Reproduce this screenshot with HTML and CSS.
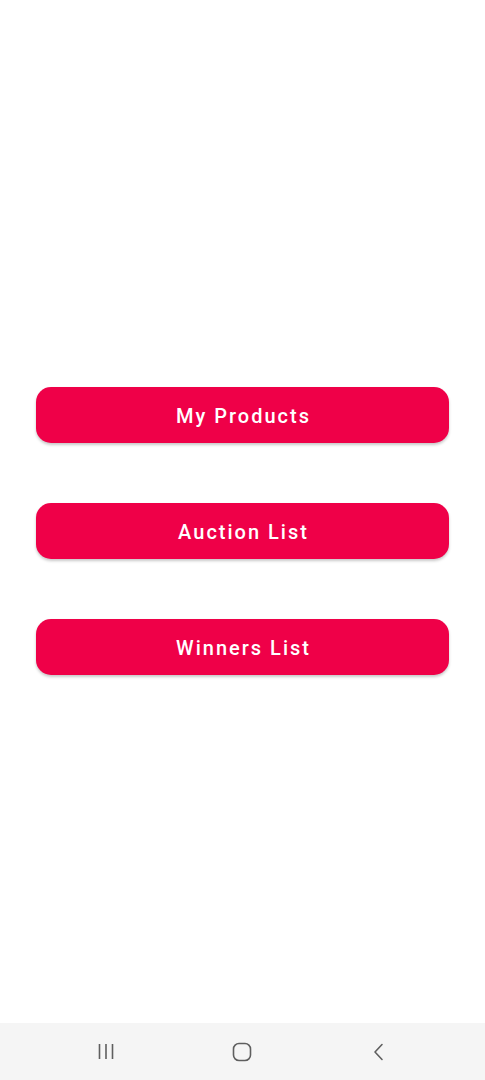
FILE: index.html
```html
<!DOCTYPE html>
<html>
<head>
<meta charset="utf-8">
<link rel="stylesheet" href="styles.css">
</head>
<body>
<div class="screen">
  <main class="content">
    <button class="btn">My Products</button>
    <button class="btn">Auction List</button>
    <button class="btn">Winners List</button>
  </main>
  <nav class="navbar">
    <svg class="nav-icon" width="24" height="24" viewBox="0 0 24 24"><path d="M5.5 4v15M12 4v15M18.5 4v15" stroke="#5f5f5f" stroke-width="1.6" fill="none"/></svg>
    <svg class="nav-icon" width="24" height="24" viewBox="0 0 24 24"><rect x="3.5" y="3.5" width="17" height="17" rx="5.5" stroke="#5f5f5f" stroke-width="1.6" fill="none"/></svg>
    <svg class="nav-icon" width="24" height="24" viewBox="0 0 24 24"><path d="M16 4.5 L9 12 L16 19.5" stroke="#5f5f5f" stroke-width="1.6" fill="none" stroke-linecap="round" stroke-linejoin="round"/></svg>
  </nav>
</div>
</body>
</html>
```

FILE: styles.css
```css
* { box-sizing: border-box; }
html, body { margin: 0; padding: 0; }
body { background: #ffffff; font-family: Roboto, "Noto Sans", sans-serif; }
.screen { width: 485px; height: 1080px; display: flex; flex-direction: column; }
.content {
  flex: 1;
  display: flex;
  flex-direction: column;
  gap: 60px;
  padding: 387px 36px 0 36px;
}
.btn {
  height: 56px;
  width: 413px;
  border: none;
  border-radius: 15px;
  background: #ef0048;
  color: #ffffff;
  font-family: Roboto, sans-serif;
  font-weight: 500;
  font-size: 20px;
  letter-spacing: 2px;
  box-shadow: 0 2px 3px rgba(0,0,0,0.22);
  padding: 2px 0 0 2px;
}
.navbar {
  height: 57px;
  background: #f5f5f5;
  display: flex;
  align-items: center;
  justify-content: space-between;
  padding: 0 95px 0 94px;
}
.nav-icon { display: block; }
```
